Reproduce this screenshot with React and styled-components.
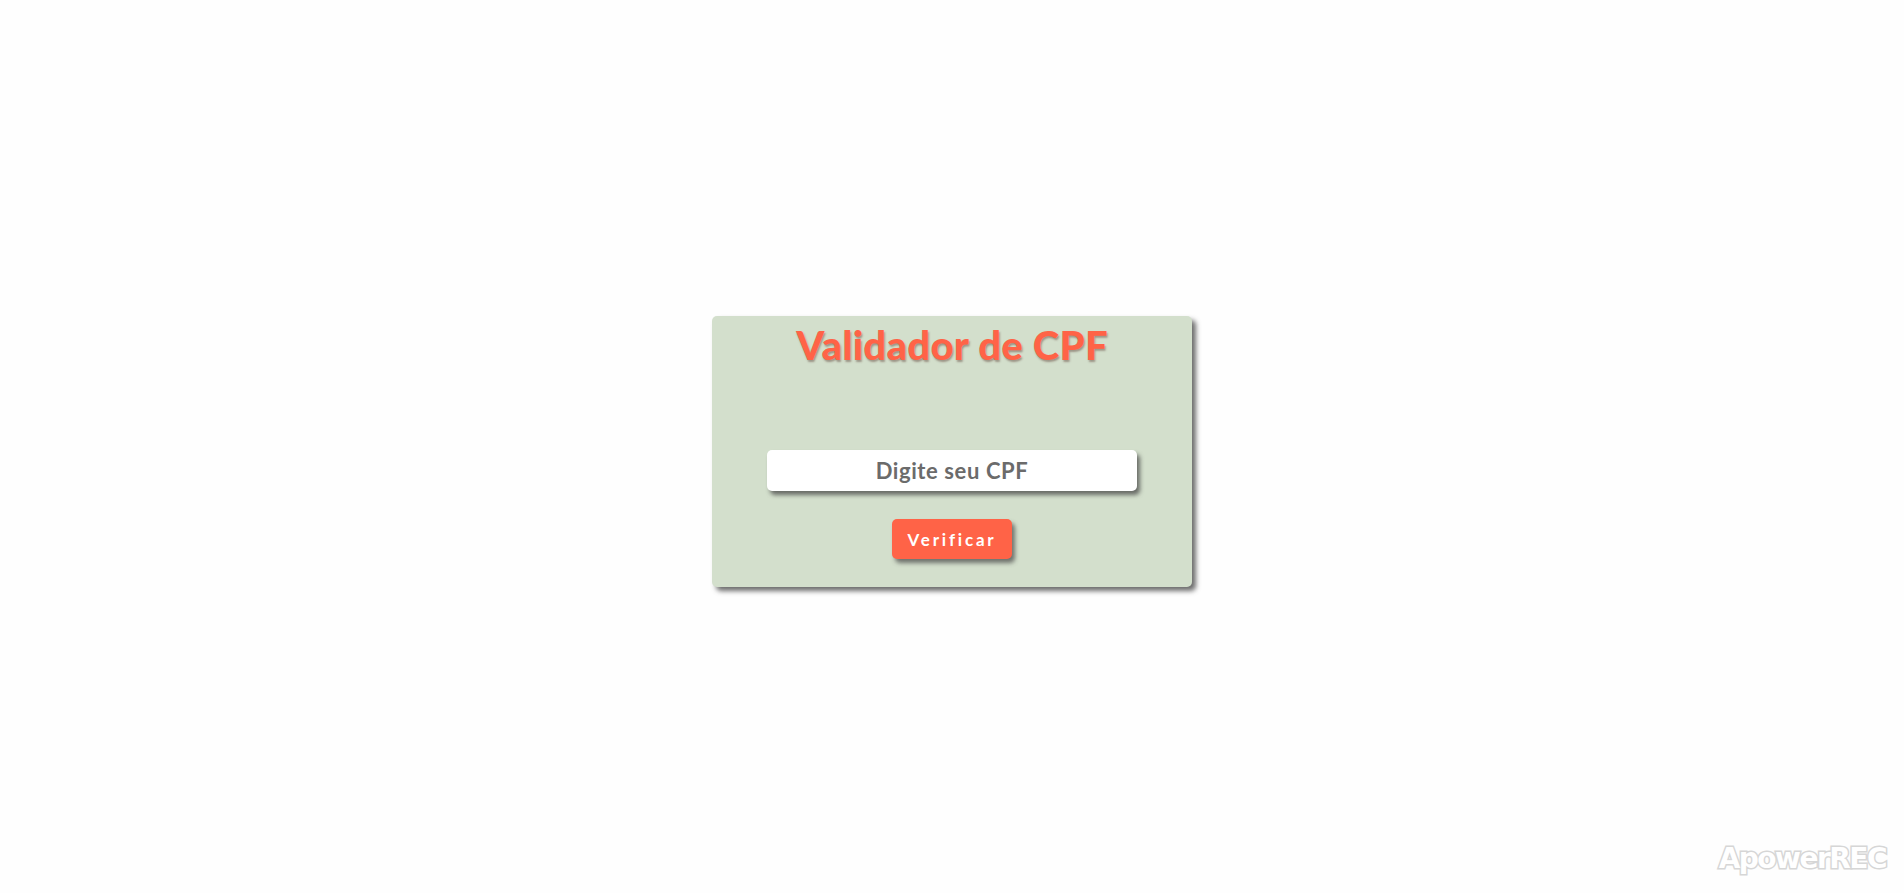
import React from "react";
import styled, { createGlobalStyle } from "styled-components";

const Global = createGlobalStyle`
  html, body { margin: 0; padding: 0; background: #fefefe; }
  body { font-family: "Lato", "Open Sans", sans-serif; }
`;

const Page = styled.main`
  position: relative;
  height: 893px;
  display: flex;
  align-items: flex-start;
  justify-content: center;
  padding-top: 316px;
  box-sizing: border-box;
`;

const Card = styled.section`
  width: 480px;
  height: 271px;
  box-sizing: border-box;
  background: #d3dfcc;
  border-radius: 5px;
  box-shadow: 4px 4px 5px rgba(60, 60, 60, 0.75);
  display: flex;
  flex-direction: column;
  align-items: center;
`;

const Title = styled.h1`
  margin: 6px 0 0;
  font-family: "Lato", sans-serif;
  font-weight: 900;
  font-size: 40px;
  line-height: 46px;
  color: #ff6347;
  text-shadow: 1px 2px 2px rgba(90, 60, 50, 0.45);
  letter-spacing: 0.3px;
`;

const Input = styled.input`
  margin-top: 82px;
  width: 370px;
  height: 41px;
  box-sizing: border-box;
  border: none;
  border-radius: 5px;
  background: #fff;
  box-shadow: 3px 4px 4px rgba(70, 70, 70, 0.75);
  text-align: center;
  font-family: "Lato", sans-serif;
  font-weight: 700;
  font-size: 22px;
  letter-spacing: 0.6px;
  color: #6b6b6b;
  outline: none;
  &::placeholder { color: #6b6b6b; opacity: 1; }
`;

const Button = styled.button`
  margin-top: 28px;
  width: 120px;
  height: 40px;
  border: none;
  border-radius: 5px;
  background: #ff6347;
  color: #fff;
  font-family: "Lato", sans-serif;
  font-weight: 700;
  font-size: 17px;
  letter-spacing: 2.8px;
  box-shadow: 3px 4px 4px rgba(70, 70, 70, 0.7);
  cursor: pointer;
`;

const Watermark = styled.div`
  position: absolute;
  right: 18px;
  bottom: 18px;
  font-family: "DejaVu Sans", sans-serif;
  font-weight: 700;
  font-size: 28px;
  letter-spacing: -1.5px;
  color: #ffffff;
  -webkit-text-stroke: 3px #d6d6d6;
  paint-order: stroke fill;
`;

export default function App() {
  return (
    <>
      <Global />
      <Page>
        <Card>
          <Title>Validador de CPF</Title>
          <Input placeholder="Digite seu CPF" />
          <Button>Verificar</Button>
        </Card>
        <Watermark>ApowerREC</Watermark>
      </Page>
    </>
  );
}
